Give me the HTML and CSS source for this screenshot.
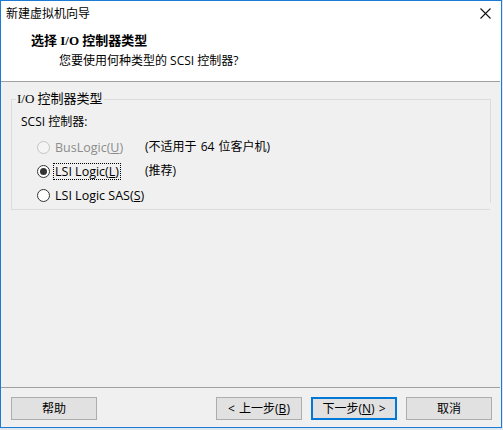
FILE: index.html
```html
<!DOCTYPE html>
<html lang="zh-CN">
<head>
<meta charset="utf-8">
<title>新建虚拟机向导</title>
<link rel="stylesheet" href="styles.css">
</head>
<body>
<div class="window">
  <div class="titlebar">
    <span class="title">新建虚拟机向导</span>
    <svg class="close" width="11" height="11" viewBox="0 0 11 11"><path d="M0.5 0.5 L10.5 10.5 M10.5 0.5 L0.5 10.5" stroke="#111" stroke-width="1.1" fill="none"/></svg>
  </div>
  <div class="header">
    <div class="heading">选择 I/O 控制器类型</div>
    <div class="subtitle">您要使用何种类型的 SCSI 控制器?</div>
  </div>
  <div class="sep"></div>
  <div class="content">
    <fieldset class="group">
      <legend class="legend">I/O 控制器类型</legend>
      <div class="group-label">SCSI 控制器:</div>
      <div class="options">
        <label class="opt disabled"><input type="radio" name="c" disabled><span class="txt">BusLogic(<u>U</u>)</span></label>
        <span class="note">(不适用于 64 位客户机)</span>
        <label class="opt"><input type="radio" name="c" checked><span class="txt focus">LSI Logic(<u>L</u>)</span></label>
        <span class="note">(推荐)</span>
        <label class="opt wide"><input type="radio" name="c"><span class="txt">LSI Logic SAS(<u>S</u>)</span></label>
      </div>
      <span class="glitch"></span>
    </fieldset>
  </div>
  <div class="sep bottom"></div>
  <div class="footer">
    <button class="btn">帮助</button>
    <div class="spacer"></div>
    <button class="btn">&lt; 上一步(<u>B</u>)</button>
    <button class="btn default">下一步(<u>N</u>) &gt;</button>
    <button class="btn">取消</button>
  </div>
</div>
</body>
</html>
```
FILE: styles.css
```css
html, body {
  margin: 0;
  padding: 0;
  background: #dfe7ef;
}
body {
  font-family: "Open Sans", "Noto Sans CJK SC", sans-serif;
  font-size: 12px;
  color: #000;
}
.window {
  width: 502px;
  height: 428px;
  box-sizing: border-box;
  border: 1px solid #1c7bd3;
  background: #f0f0f0;
  display: flex;
  flex-direction: column;
}
.titlebar {
  height: 29px;
  background: #fff;
  display: flex;
  align-items: flex-start;
  padding-left: 5px;
  padding-right: 10px;
}
.title {
  margin-top: 4px;
  line-height: 16px;
  font-family: "Noto Sans CJK SC", sans-serif;
}
.close {
  margin-left: auto;
  margin-top: 7px;
}
.header {
  height: 51px;
  background: #fff;
  padding-left: 30px;
  box-sizing: border-box;
  padding-top: 3px;
}
.heading {
  font-family: "Liberation Serif", "Noto Sans CJK SC", serif;
  font-weight: bold;
  font-size: 13px;
  line-height: 16px;
}
.subtitle {
  margin-top: 4px;
  padding-left: 28px;
  line-height: 16px;
}
.sep {
  height: 1px;
  background: #a0a0a0;
  margin-right: 1px;
}
.content {
  flex: 1;
  padding: 9px 10px 0 10px;
}
.group {
  position: relative;
  margin: 0;
  border: 1px solid #dcdcdc;
  padding: 0 0 2px 4px;
  min-width: 0;
}
.legend {
  padding: 0 1px;
  line-height: 16px;
  font-family: "Liberation Serif", "Noto Sans CJK SC", serif;
  font-size: 13px;
}
.group-label {
  margin-top: 7px;
  padding-left: 5px;
  line-height: 16px;
}
.options {
  margin-top: 5px;
  padding-left: 21px;
  display: grid;
  grid-template-columns: 108px auto;
  grid-auto-rows: 24px;
  align-items: center;
}
.opt {
  display: flex;
  align-items: center;
  white-space: nowrap;
}
.opt.wide {
  grid-column: 1 / span 2;
}
.opt input {
  appearance: none;
  -webkit-appearance: none;
  margin: 0 3px 0 0;
  width: 13px;
  height: 13px;
  border: 1px solid #333;
  border-radius: 50%;
  background: #fff;
  box-sizing: border-box;
  display: grid;
  place-items: center;
  flex: none;
}
.opt input:checked::after {
  content: "";
  width: 7px;
  height: 7px;
  border-radius: 50%;
  background: #333;
}
.opt.disabled input {
  border-color: #c4c4c4;
  background: #f4f4f4;
}
.opt.disabled .txt {
  color: #8c8c8c;
}
.txt {
  font-size: 12.5px;
  line-height: 15px;
  padding: 0 1px;
  border: 1px dotted transparent;
}
.txt.focus {
  border-color: #000;
}
.note {
  line-height: 16px;
  word-spacing: 1px;
  white-space: nowrap;
}
.glitch {
  position: absolute;
  right: -1px;
  top: 96px;
  width: 1px;
  height: 14px;
  background: #f0f0f0;
}
.footer {
  display: flex;
  gap: 9px;
  padding: 9px 9px 7px 10px;
}
.spacer {
  flex: 1;
}
.btn {
  width: 86px;
  height: 23px;
  box-sizing: border-box;
  margin: 0;
  padding: 0;
  border: 1px solid #adadad;
  background: #e1e1e1;
  font-family: "Open Sans", "Noto Sans CJK SC", sans-serif;
  font-size: 12px;
  color: #000;
  line-height: 16px;
  word-spacing: 1px;
}
.btn.default {
  border: 2px solid #0078d7;
}
```
